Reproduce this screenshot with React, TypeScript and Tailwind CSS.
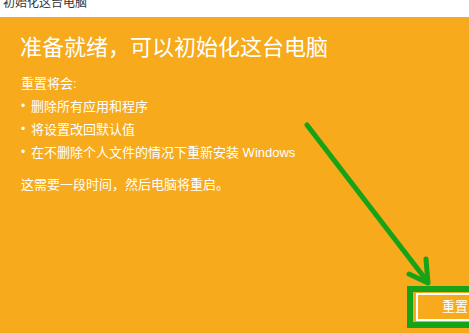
const FONT = '"Liberation Sans", "Noto Sans CJK SC", sans-serif';

const items = ['删除所有应用和程序', '将设置改回默认值', '在不删除个人文件的情况下重新安装 Windows'];

export default function App() {
  return (
    <div
      className="relative flex h-[333px] w-[469px] flex-col overflow-hidden bg-[#f6aa1c]"
      style={{ fontFamily: FONT }}
    >
      {/* window title, cut at the top */}
      <div className="h-[17px] shrink-0 overflow-hidden bg-white pl-[3px]">
        <div className="-mt-[5px] text-[12px] leading-[16px] text-[#333]">初始化这台电脑</div>
      </div>

      <div className="flex flex-1 flex-col pl-[20px] pt-[17px] text-white">
        <h1 className="text-[22px] leading-[28px] font-normal">准备就绪，可以初始化这台电脑</h1>

        <div className="mt-[10px] pl-px text-[13px] leading-[23px]">
          <p>重置将会:</p>
          {items.map((t) => (
            <p key={t} className="flex items-center">
              <span className="w-[10px] shrink-0 text-[12px]">•</span>
              <span>{t}</span>
            </p>
          ))}
          <p className="mt-[9px]">这需要一段时间，然后电脑将重启。</p>
        </div>

        <div className="mt-auto mb-[5px] flex pl-[387px]">
          <div className="shrink-0 border-[6px] border-r-0 border-[#17a317] py-px pl-[3px]">
            <button className="flex h-[28px] w-[80px] items-center border-2 border-white pl-[24px] text-[13px] text-white">
              重置
            </button>
          </div>
        </div>
      </div>

      {/* annotation arrow */}
      <svg className="pointer-events-none absolute inset-0" width="469" height="333" viewBox="0 0 469 333">
        <g stroke="#17a317" strokeWidth="5" strokeLinecap="round" strokeLinejoin="round" fill="none">
          <line x1="307" y1="125" x2="427" y2="281" />
          <polyline points="409,274 428,283 426,259" />
        </g>
      </svg>
    </div>
  );
}
